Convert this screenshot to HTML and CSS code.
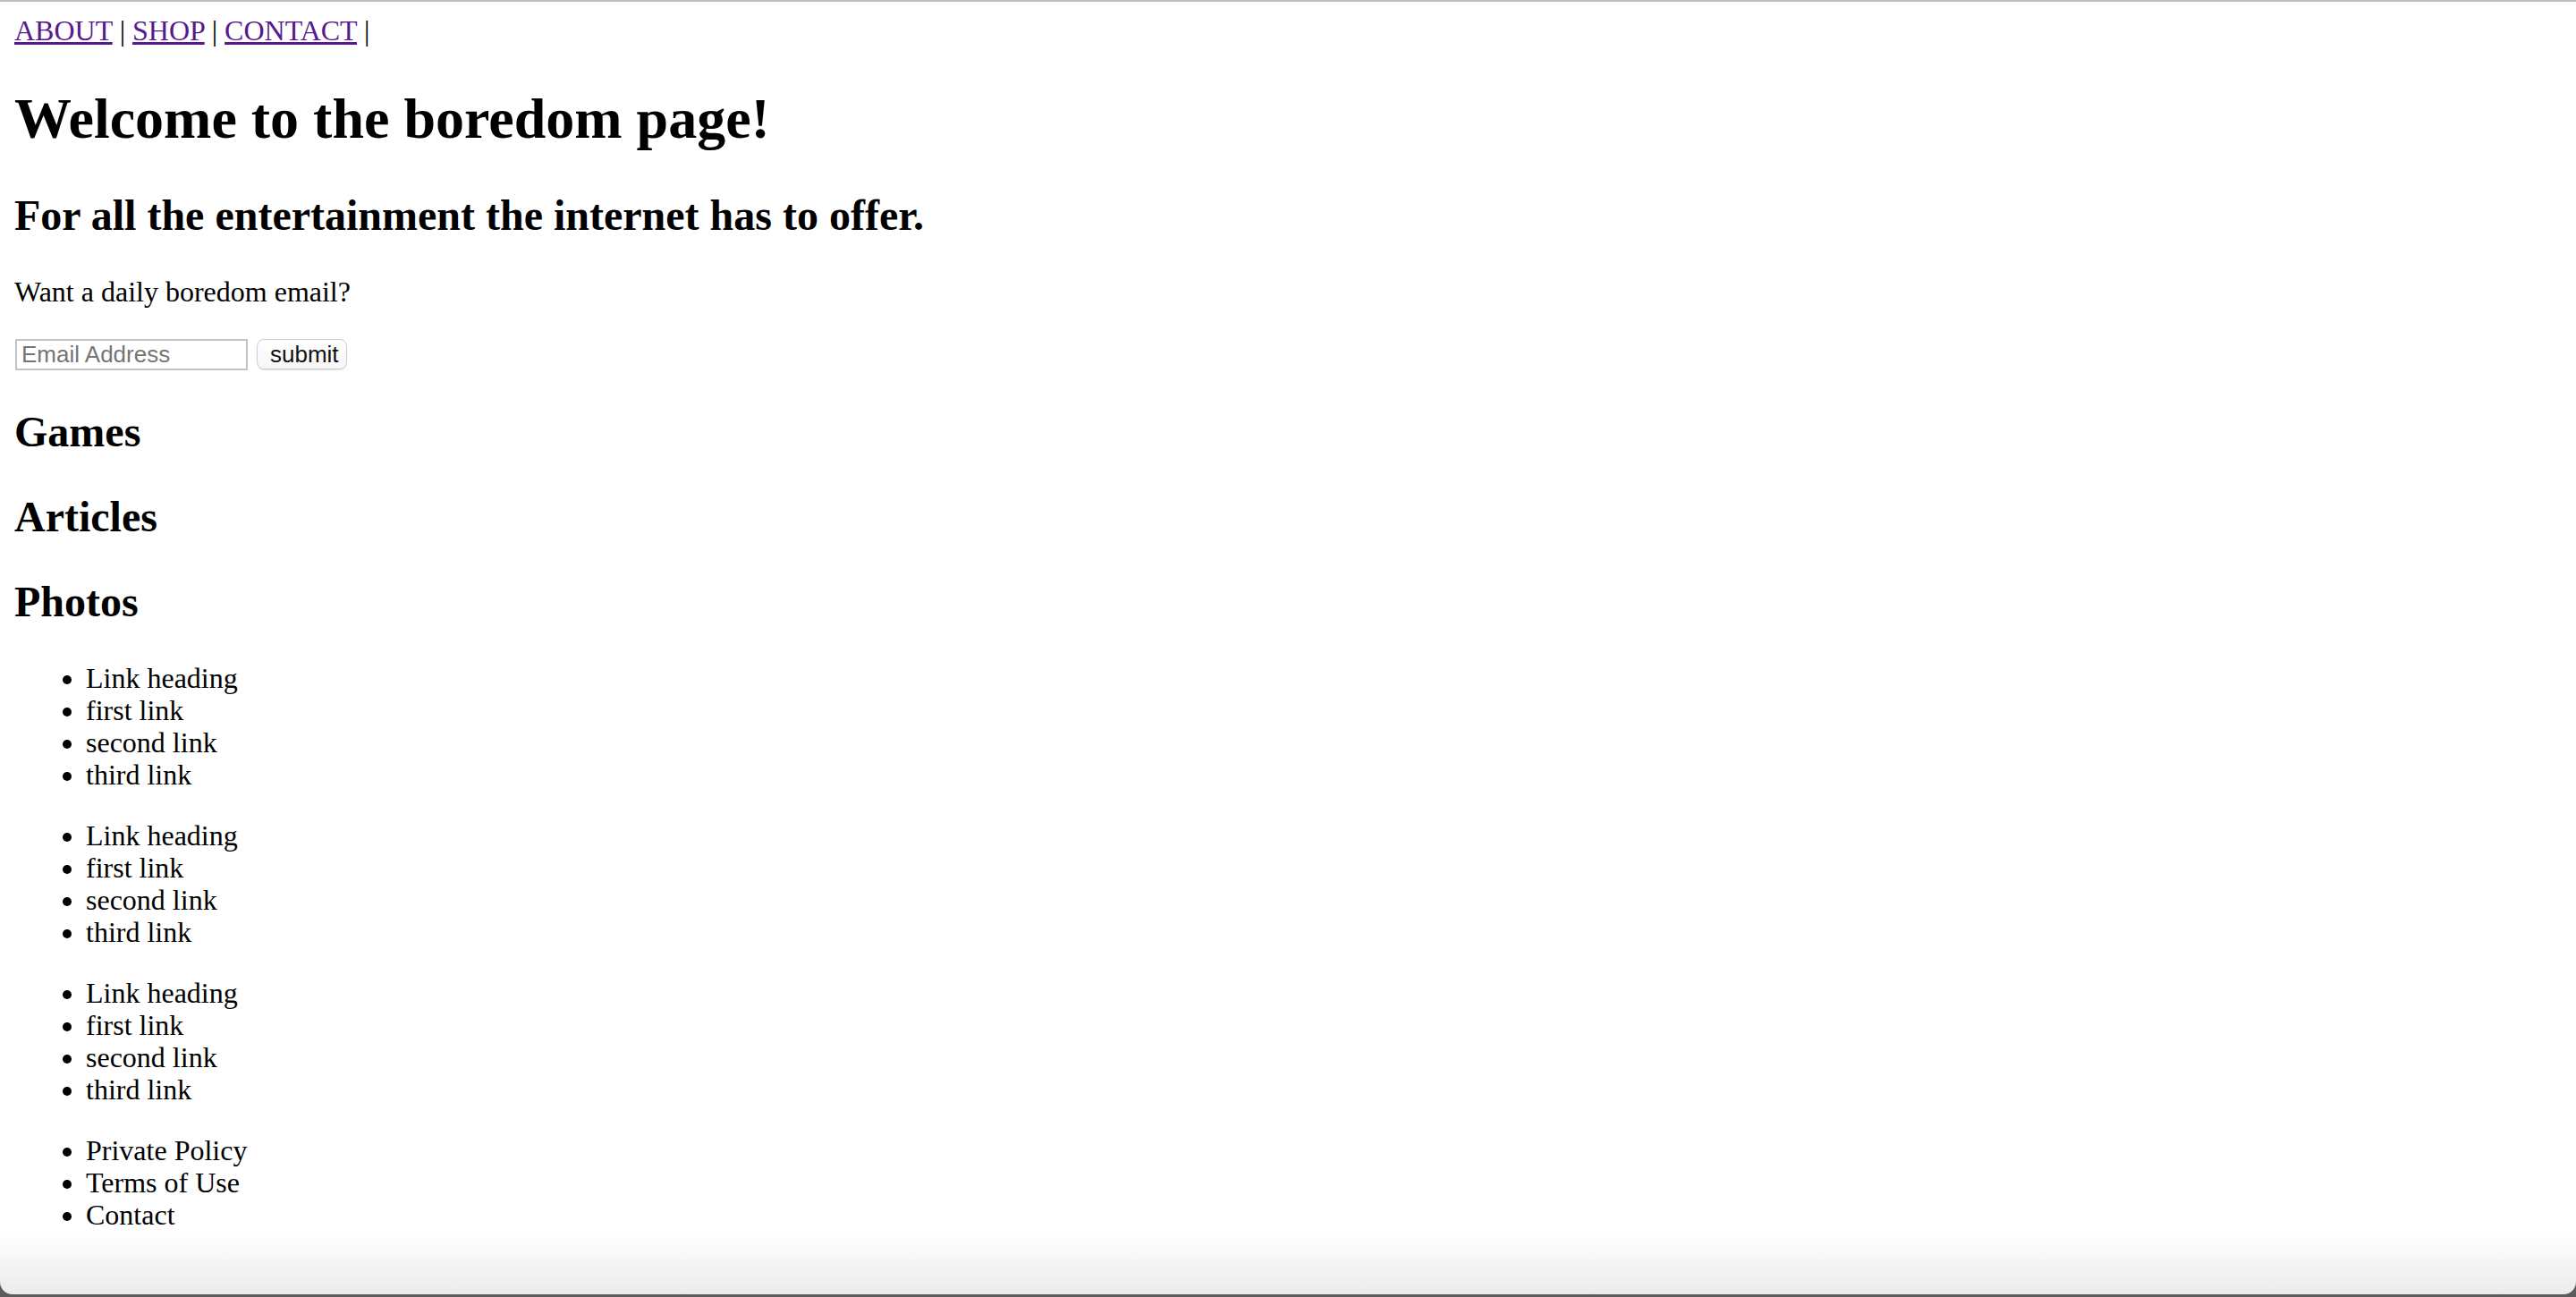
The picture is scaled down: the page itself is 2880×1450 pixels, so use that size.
FILE: index.html
```html
<!DOCTYPE html>
<html lang="en">
<head>
<meta charset="utf-8">
<title>Boredom</title>
<link rel="stylesheet" href="styles.css">
</head>
<body>
<div class="window">
  <div class="nav"><a href="#">ABOUT</a> | <a href="#">SHOP</a> | <a href="#">CONTACT</a> |</div>
  <h1 class="title">Welcome to the boredom page!</h1>
  <h2 class="subtitle">For all the entertainment the internet has to offer.</h2>
  <p class="text">Want a daily boredom email?</p>
  <form class="signup">
    <input class="email" type="text" placeholder="Email Address">
    <button class="submit" type="button">submit</button>
  </form>
  <h2 class="section">Games</h2>
  <h2 class="section">Articles</h2>
  <h2 class="section">Photos</h2>
  <ul class="links">
    <li>Link heading</li>
    <li>first link</li>
    <li>second link</li>
    <li>third link</li>
  </ul>
  <ul class="links">
    <li>Link heading</li>
    <li>first link</li>
    <li>second link</li>
    <li>third link</li>
  </ul>
  <ul class="links">
    <li>Link heading</li>
    <li>first link</li>
    <li>second link</li>
    <li>third link</li>
  </ul>
  <ul class="links">
    <li>Private Policy</li>
    <li>Terms of Use</li>
    <li>Contact</li>
  </ul>
</div>
</body>
</html>
```

FILE: styles.css
```css
html {
  background: #5c5c5c;
  margin: 0;
  padding: 0;
}

body {
  margin: 0;
  padding: 0;
  font-family: "Liberation Serif", "Times New Roman", serif;
  font-size: 32px;
  color: #000;
}

.window {
  box-sizing: border-box;
  height: 1447px;
  padding: 14px 16px 0 16px;
  border-top: 2px solid #bdbdbd;
  border-radius: 0 0 14px 14px;
  background: linear-gradient(to bottom, #ffffff 0, #ffffff calc(100% - 70px), #ebebeb 100%);
  overflow: hidden;
}

.nav {
  line-height: normal;
}

.nav a {
  color: #551a8b;
  text-decoration: underline;
}

.title {
  font-size: 64px;
  font-weight: bold;
  margin: 42.88px 0;
}

.subtitle,
.section {
  font-size: 48px;
  font-weight: bold;
  margin: 39.84px 0;
}

.text {
  margin: 32px 0;
}

.signup {
  display: flex;
  align-items: center;
  gap: 10px;
  height: 39px;
  margin: 0;
}

.email {
  box-sizing: border-box;
  width: 260px;
  height: 35px;
  margin: 0 0 0 1px;
  padding: 2px 5px;
  border: 2px solid #c2c2c2;
  font-family: "Liberation Sans", Arial, sans-serif;
  font-size: 26px;
  color: #000;
  background: #fff;
}

.email::placeholder {
  color: #757575;
}

.submit {
  box-sizing: border-box;
  width: 101px;
  height: 34px;
  margin: 0;
  padding: 0 14px;
  border: 1px solid #cfcfcf;
  border-radius: 8px;
  background: linear-gradient(to bottom, #ffffff, #f6f6f6);
  box-shadow: 0 1px 1px rgba(0, 0, 0, 0.12);
  font-family: "Liberation Sans", Arial, sans-serif;
  font-size: 26px;
  color: #111;
}

.links {
  margin: 32px 0;
  padding-left: 80px;
  list-style: disc;
  line-height: 36px;
}
```
